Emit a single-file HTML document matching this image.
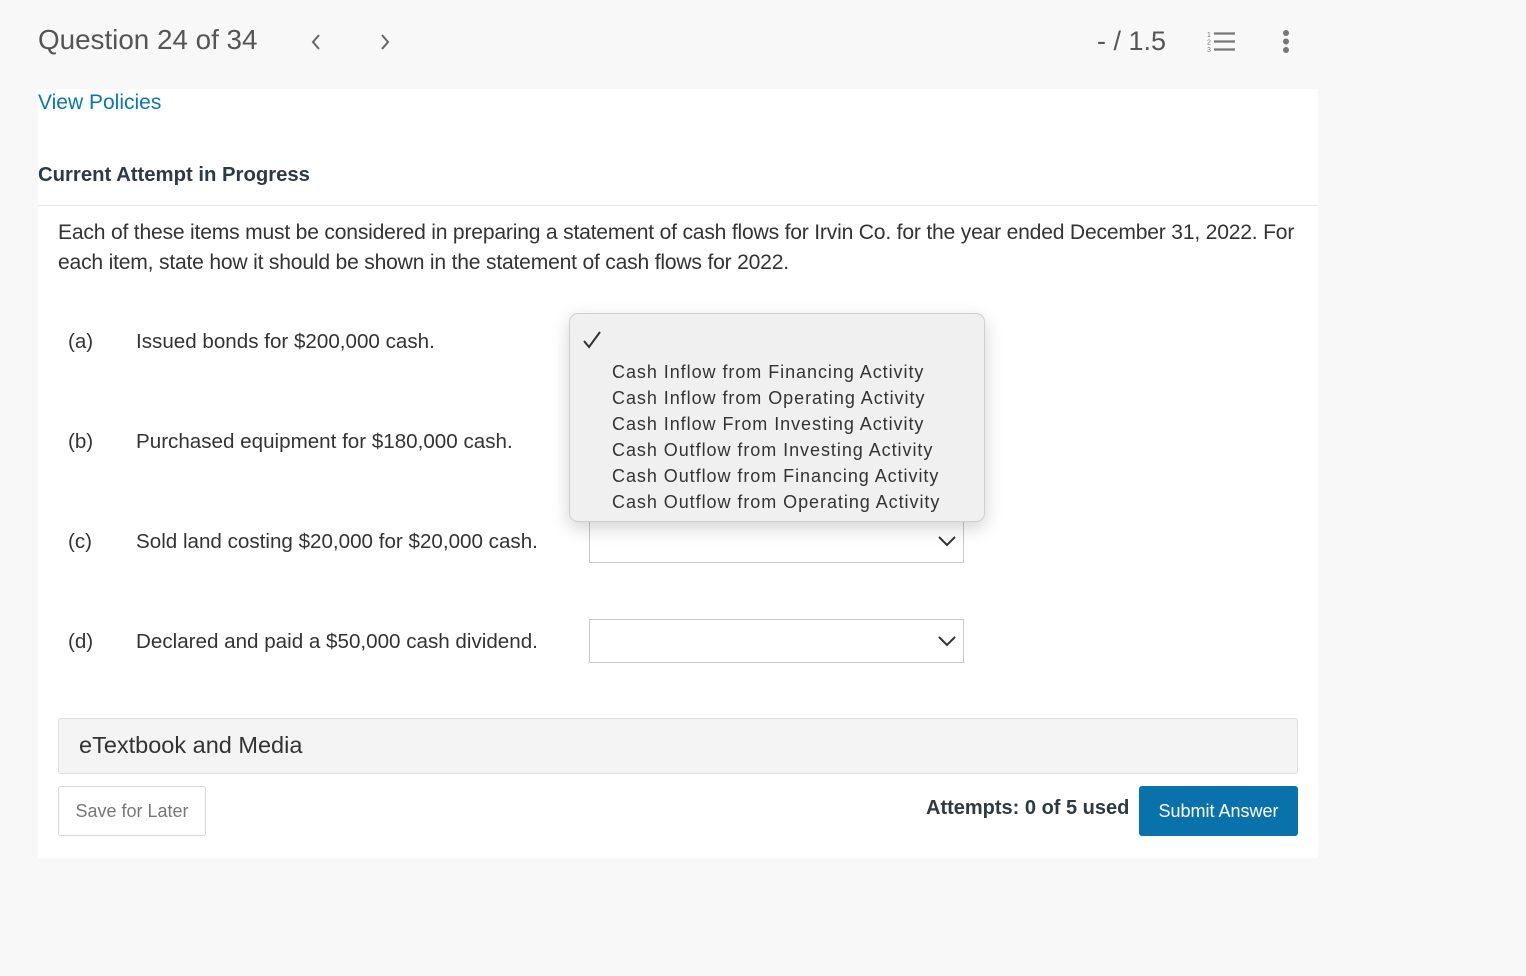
<!DOCTYPE html>
<html><head><meta charset="utf-8"><style>
*{margin:0;padding:0;box-sizing:border-box}
body{width:1526px;height:976px;background:#f8f8f8;font-family:"Liberation Sans",sans-serif;color:#333;position:relative;overflow:hidden}
.a{position:absolute;white-space:nowrap}
.card{position:absolute;left:38px;top:89px;width:1280px;height:769px;background:#fff}
.sel{position:absolute;left:589px;width:375px;height:44px;border:1px solid #c8c8c8;background:#fff}
.sel svg{position:absolute;right:6px;top:14px}
.lbl{font-size:20.6px;color:#333}
</style></head><body>
<div class="a" style="left:38px;top:24px;font-size:27.8px;color:#555">Question 24 of 34</div>
<svg class="a" style="left:309px;top:33px" width="14" height="18"><path d="M10 2 L4 9 L10 16" stroke="#666" stroke-width="2" fill="none"/></svg>
<svg class="a" style="left:378px;top:33px" width="14" height="18"><path d="M4 2 L10 9 L4 16" stroke="#666" stroke-width="2" fill="none"/></svg>
<div class="a" style="left:1097px;top:26px;font-size:27px;color:#555">- / 1.5</div>
<svg class="a" style="left:1206px;top:30px" width="30" height="24"><text x="1" y="7" font-size="7" fill="#777" font-family="Liberation Sans">1</text><text x="1" y="14.5" font-size="7" fill="#777" font-family="Liberation Sans">2</text><text x="1" y="22" font-size="7" fill="#777" font-family="Liberation Sans">3</text><path d="M8 3.5H29M8 11.5H29M8 19.5H29" stroke="#777" stroke-width="2.2"/></svg>
<svg class="a" style="left:1280px;top:30px" width="12" height="24"><circle cx="6" cy="3" r="3" fill="#777"/><circle cx="6" cy="11.5" r="3" fill="#777"/><circle cx="6" cy="20" r="3" fill="#777"/></svg>
<div class="card"></div>
<div class="a" style="left:38px;top:91px;font-size:21px;color:#0a77b0">View Policies</div>
<div class="a" style="left:38px;top:164px;font-size:20.3px;font-weight:bold;color:#2d3a45">Current Attempt in Progress</div>
<div class="a" style="left:38px;top:205px;width:1280px;height:1px;background:#e5e5e5"></div>
<div class="a" style="left:58px;top:218px;font-size:21.1px;line-height:30px;color:#333;letter-spacing:-0.2px">Each of these items must be considered in preparing a statement of cash flows for Irvin Co. for the year ended December 31, 2022. For<br>each item, state how it should be shown in the statement of cash flows for 2022.</div>
<div class="a lbl" style="left:68px;top:330px">(a)</div><div class="a lbl" style="left:136px;top:330px">Issued bonds for $200,000 cash.</div>
<div class="a lbl" style="left:68px;top:430px">(b)</div><div class="a lbl" style="left:136px;top:430px">Purchased equipment for $180,000 cash.</div>
<div class="a lbl" style="left:68px;top:530px">(c)</div><div class="a lbl" style="left:136px;top:530px">Sold land costing $20,000 for $20,000 cash.</div>
<div class="a lbl" style="left:68px;top:630px">(d)</div><div class="a lbl" style="left:136px;top:630px">Declared and paid a $50,000 cash dividend.</div>
<div class="sel" style="top:519px"><svg width="20" height="14"><path d="M2 3L10 11L18 3" stroke="#333" stroke-width="2" fill="none"/></svg></div>
<div class="sel" style="top:619px"><svg width="20" height="14"><path d="M2 3L10 11L18 3" stroke="#333" stroke-width="2" fill="none"/></svg></div>
<div class="a" style="left:569px;top:313px;width:416px;height:209px;background:#f0f0f0;border:1px solid #cfcfcf;border-radius:9px;box-shadow:0 6px 18px rgba(0,0,0,.18)">
<svg style="position:absolute;left:12px;top:16px" width="20" height="20"><path d="M2 11L7 17L18 2" stroke="#333" stroke-width="2" fill="none"/></svg>
<div style="position:absolute;left:42px;top:45px;font-size:18px;line-height:26px;color:#333;letter-spacing:0.95px">Cash Inflow from Financing Activity<br>Cash Inflow from Operating Activity<br>Cash Inflow From Investing Activity<br>Cash Outflow from Investing Activity<br>Cash Outflow from Financing Activity<br>Cash Outflow from Operating Activity</div>
</div>
<div class="a" style="left:58px;top:718px;width:1240px;height:56px;background:#f4f4f4;border:1px solid #ddd;border-radius:3px"></div>
<div class="a" style="left:79px;top:732px;font-size:23.5px;color:#333">eTextbook and Media</div>
<div class="a" style="left:58px;top:786px;width:148px;height:50px;border:1px solid #d6d6d6;border-radius:3px;background:#fff;font-size:18px;color:#777;text-align:center;line-height:48px">Save for Later</div>
<div class="a" style="left:926px;top:797px;font-size:20px;font-weight:bold;color:#2d3a45">Attempts: 0 of 5 used</div>
<div class="a" style="left:1139px;top:786px;width:159px;height:50px;border-radius:3px;background:#0a72aa;color:#fff;font-size:18px;text-align:center;line-height:50px">Submit Answer</div>
</body></html>
